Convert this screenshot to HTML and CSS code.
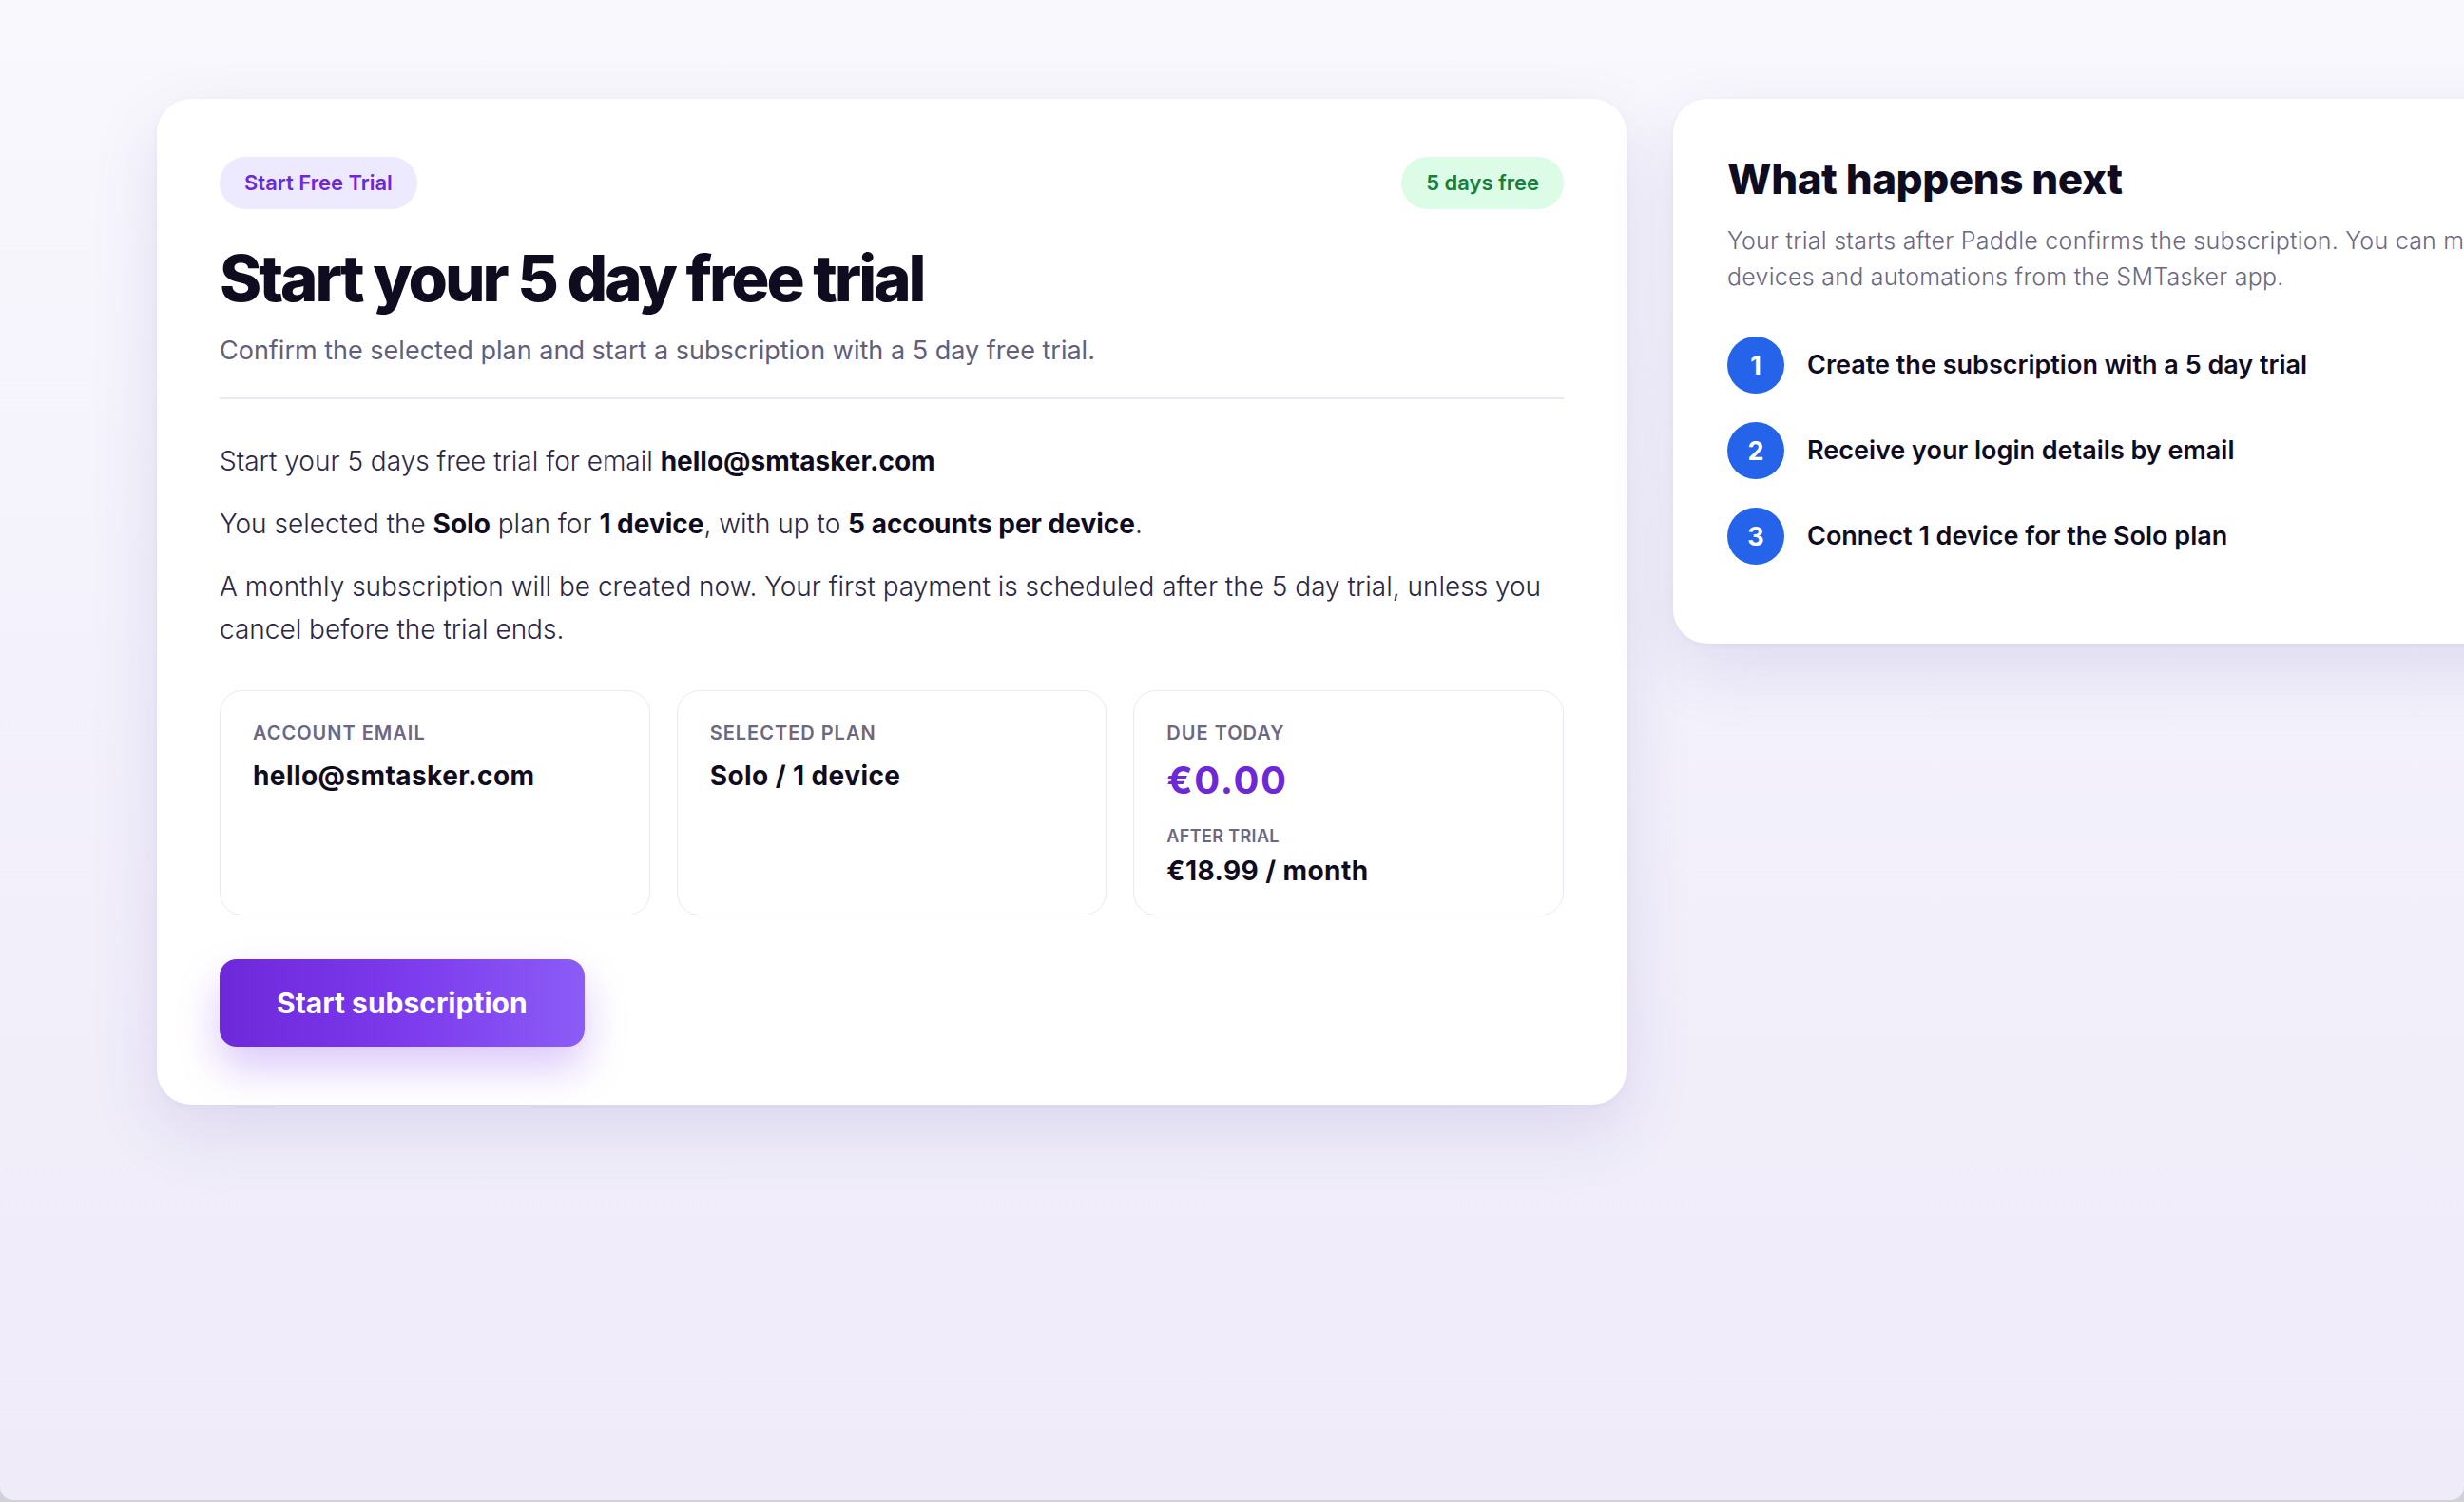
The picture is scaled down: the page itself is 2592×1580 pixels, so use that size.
FILE: index.html
```html
<!DOCTYPE html>
<html lang="en">
<head>
<meta charset="utf-8">
<title>Start your 5 day free trial</title>
<link rel="stylesheet" href="styles.css">
</head>
<body>
<div class="frame">
  <main class="checkout">
    <div class="checkout-top">
      <span class="pill pill-purple">Start Free Trial</span>
      <span class="pill pill-green">5 days free</span>
    </div>
    <h1 class="checkout-title">Start your 5 day free trial</h1>
    <p class="checkout-sub">Confirm the selected plan and start a subscription with a 5 day free trial.</p>

    <div class="checkout-body">
      <p>Start your 5 days free trial for email <strong>hello@smtasker.com</strong></p>
      <p>You selected the <strong>Solo</strong> plan for <strong>1 device</strong>, with up to <strong>5 accounts per device</strong>.</p>
      <p>A monthly subscription will be created now. Your first payment is scheduled after the 5 day trial, unless you cancel before the trial ends.</p>
    </div>

    <div class="summary">
      <div class="summary-box">
        <div class="summary-label">Account email</div>
        <div class="summary-value">hello@smtasker.com</div>
      </div>
      <div class="summary-box">
        <div class="summary-label">Selected plan</div>
        <div class="summary-value">Solo / 1 device</div>
      </div>
      <div class="summary-box">
        <div class="summary-label">Due today</div>
        <div class="summary-price">€0.00</div>
        <div class="summary-label summary-label-small">After trial</div>
        <div class="summary-value summary-value-tight">€18.99 / month</div>
      </div>
    </div>

    <button class="btn-primary" type="button">Start subscription</button>
  </main>

  <aside class="next">
    <h2 class="next-title">What happens next</h2>
    <p class="next-text">Your trial starts after Paddle confirms the subscription. You can manage devices and automations from the SMTasker app.</p>
    <ol class="steps">
      <li class="step"><span class="step-num">1</span><span class="step-text">Create the subscription with a 5 day trial</span></li>
      <li class="step"><span class="step-num">2</span><span class="step-text">Receive your login details by email</span></li>
      <li class="step"><span class="step-num">3</span><span class="step-text">Connect 1 device for the Solo plan</span></li>
    </ol>
  </aside>
</div>
</body>
</html>
```

FILE: styles.css
```css
* {
  box-sizing: border-box;
}

html,
body {
  margin: 0;
  padding: 0;
}

body {
  background: #d2d0db;
  font-family: Inter, "Noto Sans", sans-serif;
  color: #0f0c1f;
  overflow: hidden;
}

.frame {
  height: 1578px;
  border-radius: 0 0 14px 14px;
  overflow: hidden;
  background: linear-gradient(180deg, #f9f8fd 0%, #f3f1fb 45%, #efebf9 100%);
  padding: 104px 0 0 165px;
  display: flex;
  align-items: flex-start;
  gap: 49px;
}

/* ---------- main checkout card ---------- */

.checkout {
  flex: 0 0 1546px;
  background: #ffffff;
  border-radius: 36px;
  padding: 61px 66px 61px;
  box-shadow: 0 26px 70px rgba(78, 58, 160, 0.13), 0 2px 6px rgba(78, 58, 160, 0.04);
}

.checkout-top {
  display: flex;
  justify-content: space-between;
  align-items: center;
}

.pill {
  display: inline-block;
  font-size: 22px;
  line-height: 23px;
  font-weight: 600;
  letter-spacing: 0;
  padding: 16px 26px;
  border-radius: 999px;
}

.pill-purple {
  background: #ede9fe;
  color: #6d28d9;
}

.pill-green {
  background: #dcfce7;
  color: #15803d;
}

.checkout-title {
  margin: 36px 0 0;
  font-size: 67px;
  line-height: 74px;
  font-weight: 800;
  letter-spacing: -0.045em;
  color: #0f0c1f;
}

.checkout-sub {
  margin: 19px 0 0;
  font-size: 27px;
  line-height: 39px;
  color: #625e7c;
  letter-spacing: 0;
  padding-bottom: 30px;
  border-bottom: 2px solid #ebe8f6;
}

.checkout-body {
  padding-top: 43px;
}

.checkout-body p {
  margin: 0 0 21px;
  font-size: 28px;
  line-height: 45px;
  font-weight: 300;
  letter-spacing: 0;
  color: #2b2745;
}

.checkout-body p:last-child {
  margin-bottom: 0;
}

.checkout-body strong {
  font-weight: 700;
  color: #0f0c1f;
}

/* ---------- summary boxes ---------- */

.summary {
  margin-top: 41px;
  display: grid;
  grid-template-columns: repeat(3, 1fr);
  gap: 28px;
}

.summary-box {
  border: 1px solid #ebe8f6;
  border-radius: 24px;
  padding: 31px 34px 28px;
}

.summary-label {
  font-size: 20px;
  line-height: 26px;
  font-weight: 600;
  text-transform: uppercase;
  letter-spacing: 0.05em;
  color: #6b6783;
}

.summary-label-small {
  margin-top: 23px;
  font-size: 18px;
  line-height: 24px;
  letter-spacing: 0.02em;
}

.summary-value {
  margin-top: 14px;
  font-size: 28px;
  line-height: 36px;
  font-weight: 700;
  letter-spacing: 0.015em;
  color: #0f0c1f;
}

.summary-value-tight {
  margin-top: 6px;
}

.summary-price {
  margin-top: 13px;
  font-size: 40px;
  line-height: 48px;
  font-weight: 700;
  letter-spacing: 0.04em;
  color: #6d28d9;
}

/* ---------- button ---------- */

.btn-primary {
  margin-top: 46px;
  height: 92px;
  padding: 0 60px;
  border: 0;
  border-radius: 18px;
  background: linear-gradient(90deg, #6d28d9 0%, #7c3aed 50%, #8b5cf6 100%);
  color: #ffffff;
  font-family: inherit;
  font-size: 30px;
  font-weight: 700;
  letter-spacing: 0;
  box-shadow: 0 22px 44px rgba(124, 58, 237, 0.28);
  cursor: pointer;
}

/* ---------- side panel ---------- */

.next {
  flex: 0 0 1000px;
  background: #ffffff;
  border-radius: 36px;
  padding: 60px 57px 83px;
  box-shadow: 0 26px 70px rgba(78, 58, 160, 0.12), 0 2px 6px rgba(78, 58, 160, 0.04);
}

.next-title {
  margin: 0;
  font-size: 44px;
  line-height: 48px;
  font-weight: 800;
  letter-spacing: -0.01em;
  color: #0f0c1f;
}

.next-text {
  margin: 22px 0 0;
  font-size: 25px;
  line-height: 38px;
  font-weight: 300;
  letter-spacing: 0.01em;
  color: #6b6783;
}

.steps {
  list-style: none;
  margin: 44px 0 0;
  padding: 0;
  display: flex;
  flex-direction: column;
  gap: 30px;
}

.step {
  display: flex;
  align-items: center;
  gap: 24px;
}

.step-num {
  flex: 0 0 60px;
  height: 60px;
  border-radius: 50%;
  background: #2563eb;
  color: #ffffff;
  display: flex;
  align-items: center;
  justify-content: center;
  font-size: 27px;
  font-weight: 700;
}

.step-text {
  font-size: 27px;
  line-height: 38px;
  font-weight: 600;
  letter-spacing: 0;
  color: #0f0c1f;
}
```
